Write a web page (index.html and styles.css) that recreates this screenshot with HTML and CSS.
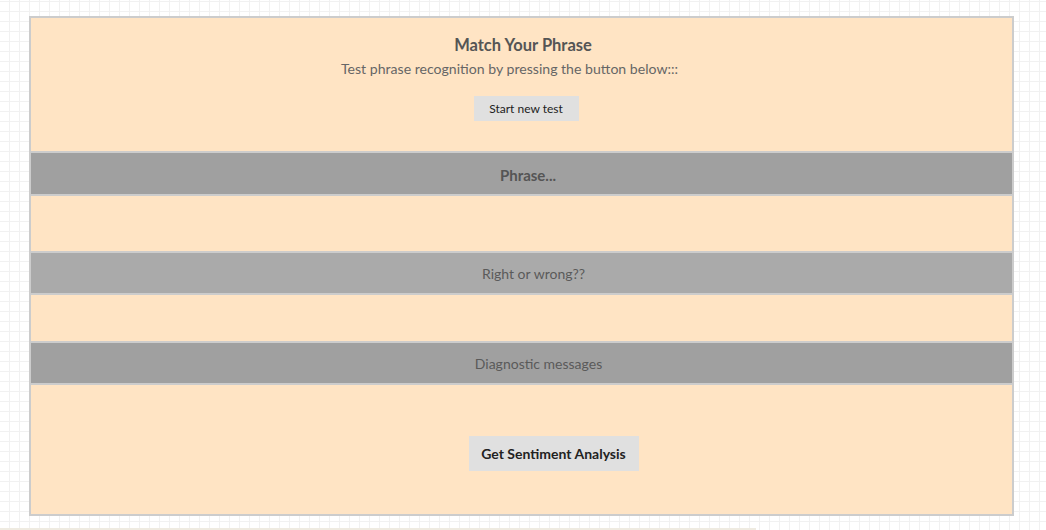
FILE: index.html
```html
<!DOCTYPE html>
<html>
<head>
<meta charset="utf-8">
<link rel="stylesheet" href="styles.css">
</head>
<body>
<div class="panel">
  <header class="intro">
    <h1 class="title">Match Your Phrase</h1>
    <p class="subtitle">Test phrase recognition by pressing the button below:::</p>
    <button class="btn-start">Start new test</button>
  </header>
  <div class="bar bar-phrase">Phrase...</div>
  <div class="space space-phrase"></div>
  <div class="bar bar-result">Right or wrong??</div>
  <div class="space space-result"></div>
  <div class="bar bar-diag">Diagnostic messages</div>
  <div class="footer-area">
    <button class="btn-sentiment">Get Sentiment Analysis</button>
  </div>
</div>
<div class="bottom-strip"></div>
</body>
</html>
```
FILE: styles.css
```css
html, body {
  margin: 0;
  padding: 0;
}
body {
  width: 1046px;
  height: 530px;
  overflow: hidden;
  font-family: Lato, "Open Sans", sans-serif;
  background-color: #ffffff;
  background-image:
    linear-gradient(to right, #f1f1f1 1px, transparent 1px),
    linear-gradient(to bottom, #f1f1f1 1px, transparent 1px);
  background-size: 10px 10px;
  background-position: 9px 1px;
  padding-top: 16px;
  box-sizing: border-box;
}
.panel {
  margin-left: 29px;
  width: 985px;
  box-sizing: border-box;
  border: 2px solid #cccccc;
  background: #ffe4c4;
  display: flex;
  flex-direction: column;
}
.intro {
  height: 133px;
  box-sizing: border-box;
  padding-top: 17px;
  display: flex;
  flex-direction: column;
  align-items: center;
}
.title {
  margin: 0;
  font-size: 16.5px;
  line-height: 20px;
  font-weight: bold;
  color: #555555;
  padding-left: 3px;
}
.subtitle {
  margin: 5px 0 0 0;
  font-size: 14.1px;
  line-height: 18px;
  color: #666666;
  padding-right: 24px;
}
.btn-start {
  margin-top: 18px;
  width: 105px;
  height: 25px;
  border: none;
  background: #e0e0e0;
  font-family: Lato, sans-serif;
  font-size: 12px;
  color: #222222;
  padding: 0;
  margin-left: 9px;
}
.bar {
  border-top: 2px solid #cccccc;
  border-bottom: 2px solid #cccccc;
  display: flex;
  align-items: center;
  justify-content: center;
  color: #5a5a5a;
  font-size: 14px;
}
.bar-phrase {
  background: #a0a0a0;
  font-weight: bold;
  font-size: 15px;
  color: #555555;
  padding-left: 13px;
  padding-top: 2px;
  height: 39px;
}
.bar-result {
  background: #aaaaaa;
  padding-left: 24px;
  padding-top: 1px;
  height: 39px;
}
.bar-diag {
  background: #a0a0a0;
  padding-left: 34px;
  padding-top: 1px;
  height: 39px;
}
.space-phrase {
  height: 55px;
}
.space-result {
  height: 46px;
}
.footer-area {
  height: 129px;
  box-sizing: border-box;
  padding-top: 51px;
  display: flex;
  justify-content: center;
  align-items: flex-start;
}
.btn-sentiment {
  width: 170px;
  height: 35px;
  border: none;
  background: #e0e0e0;
  font-family: Lato, sans-serif;
  font-size: 14px;
  font-weight: bold;
  color: #222222;
  padding: 0;
  margin-left: 64px;
}
.bottom-strip {
  margin-top: 12px;
  width: 756px;
  height: 2px;
  background: #efebe1;
}
```
